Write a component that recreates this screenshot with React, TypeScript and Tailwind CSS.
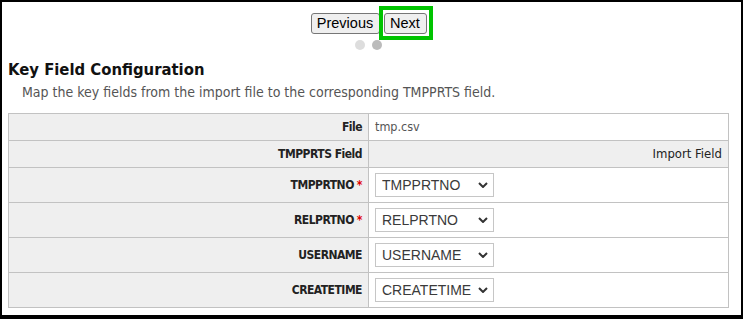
import React from 'react';

type FieldRow = { name: string; value: string; required?: boolean };

const rows: FieldRow[] = [
  { name: 'TMPPRTNO', value: 'TMPPRTNO', required: true },
  { name: 'RELPRTNO', value: 'RELPRTNO', required: true },
  { name: 'USERNAME', value: 'USERNAME' },
  { name: 'CREATETIME', value: 'CREATETIME' },
];

const FakeSelect: React.FC<{ value: string }> = ({ value }) => (
  <div className="w-[119px] h-[24px] border border-[#c6c6c6] bg-white flex items-center pl-[6px] pr-[5px] font-['Liberation_Sans',Arial,sans-serif] text-[14px] text-[#3a3a3a]">
    <span className="flex-1 whitespace-nowrap overflow-hidden">{value}</span>
    <svg width="10" height="6" viewBox="0 0 10 6" className="shrink-0">
      <polyline points="1,1 5,5 9,1" fill="none" stroke="#333" strokeWidth="2" />
    </svg>
  </div>
);

const App: React.FC = () => {
  return (
    <div className="w-[743px] h-[319px] border-black border-t-2 border-x-2 border-b-4 bg-white overflow-hidden font-['DejaVu_Sans_Condensed','DejaVu_Sans',sans-serif]">
      {/* Wizard nav */}
      <div className="pr-[6px] pt-[11px] flex flex-col items-center">
        <div className="flex gap-[4px] h-[21px]">
          <button className="block w-[69px] h-[21px] bg-[#efefef] border border-[#767676] rounded-[3px] font-['Liberation_Sans',Arial,sans-serif] text-[14.5px] leading-none text-black">
            Previous
          </button>
          <div className="relative flex">
            <button className="block w-[43px] h-[21px] bg-[#efefef] border border-[#767676] rounded-[3px] font-['Liberation_Sans',Arial,sans-serif] text-[14.5px] leading-none text-black">
              Next
            </button>
            <div className="absolute left-[-5px] top-[-7px] w-[54px] h-[34px] border-[4px] border-[#00c400] pointer-events-none"></div>
          </div>
        </div>
        <div className="flex gap-[7px] mt-[6px]">
          <span className="w-[10px] h-[10px] rounded-full bg-[#dddddd]"></span>
          <span className="w-[10px] h-[10px] rounded-full bg-[#bbbbbb]"></span>
        </div>
      </div>

      {/* Section */}
      <div className="px-[6px] mt-[10px]">
        <h2 className="text-[16.5px] leading-[20px] font-bold text-[#111]">Key Field Configuration</h2>
        <p className="mt-[4px] pl-[14px] text-[14px] leading-[16px] text-[#555]">
          Map the key fields from the import file to the corresponding TMPPRTS field.
        </p>

        {/* Mapping table */}
        <div className="mt-[13px] w-[721px] border border-[#c2c2c2]">
          <div className="flex h-[27px] border-b border-[#c2c2c2]">
            <div className="w-[360px] bg-[#efefef] border-r border-[#c2c2c2] flex items-center justify-end pr-[6px] text-[12px] tracking-[-0.5px] font-bold text-[#222]">
              File
            </div>
            <div className="flex-1 flex items-center pl-[6px] text-[12.5px] text-[#555]">tmp.csv</div>
          </div>
          <div className="flex h-[27px] border-b border-[#c2c2c2] bg-[#efefef]">
            <div className="w-[360px] border-r border-[#c2c2c2] flex items-center justify-end pr-[6px] text-[12px] tracking-[-0.5px] font-bold text-[#222]">
              TMPPRTS Field
            </div>
            <div className="flex-1 flex items-center justify-end pr-[6px] text-[13px] text-[#222]">Import Field</div>
          </div>
          {rows.map((r, i) => (
            <div key={r.name} className={`flex ${i < rows.length - 1 ? 'h-[35px] border-b border-[#c2c2c2]' : 'h-[34px]'}`}>
              <div className="w-[360px] bg-[#efefef] border-r border-[#c2c2c2] flex items-center justify-end pr-[6px] text-[12px] tracking-[-0.5px] font-bold text-[#222]">
                {r.name}
                {r.required && <span className="text-[#e00000] ml-[3px]">*</span>}
              </div>
              <div className="flex-1 flex items-center pl-[6px]">
                <FakeSelect value={r.value} />
              </div>
            </div>
          ))}
        </div>
      </div>
    </div>
  );
};

export default App;
